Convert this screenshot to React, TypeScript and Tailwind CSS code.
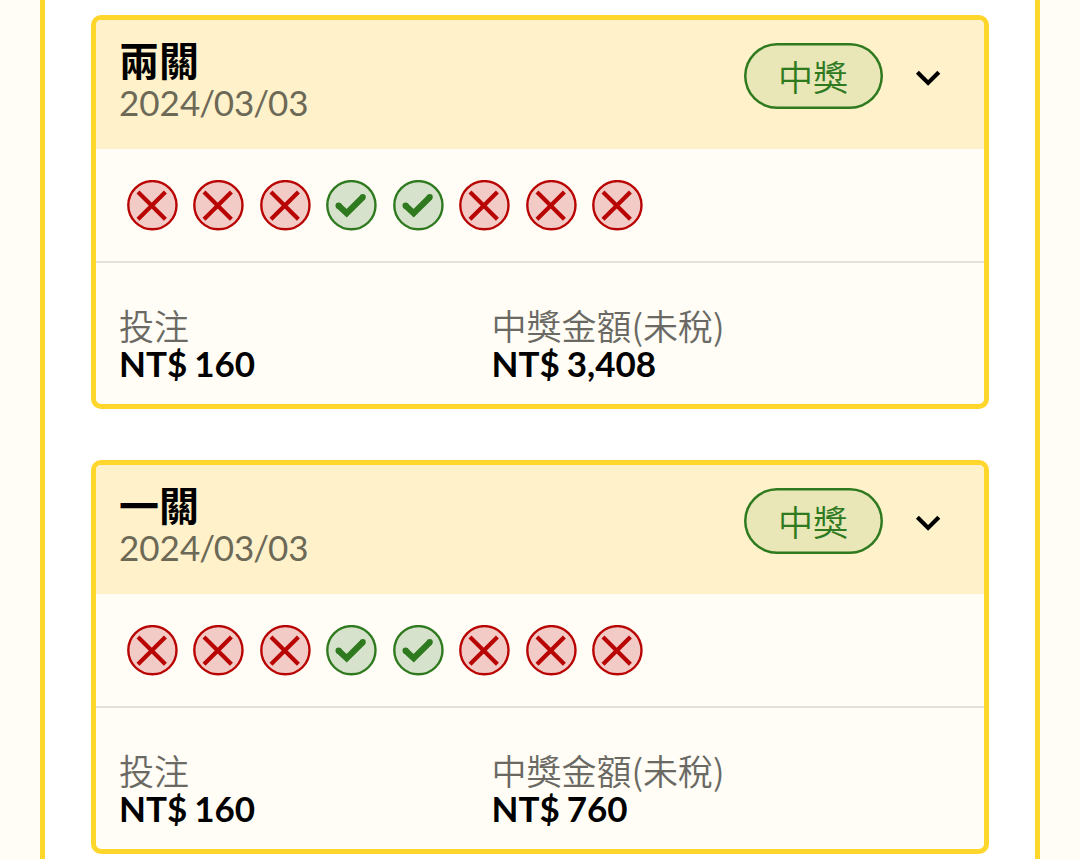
import { Fragment } from 'react';

type Ticket = { title: string; date: string; stake: string; prize: string; results: boolean[] };

const results = [false, false, false, true, true, false, false, false];

const tickets: Ticket[] = [
  { title: '兩關', date: '2024/03/03', stake: 'NT$ 160', prize: 'NT$ 3,408', results },
  { title: '一關', date: '2024/03/03', stake: 'NT$ 160', prize: 'NT$ 760', results },
];

function ResultIcon({ hit }: { hit: boolean }) {
  return hit ? (
    <svg viewBox="0 0 51 51" className="size-[51px] shrink-0" fill="none">
      <circle cx="25.4" cy="25.2" r="24.1" fill="#d6e2cc" stroke="#2f7a1f" strokeWidth="2.4" />
      <path d="M12.4 25.4 L20.7 33.2 L37 17" stroke="#2f7a1f" strokeWidth="6.2" />
      <circle cx="12.6" cy="25.7" r="3.1" fill="#2f7a1f" />
      <circle cx="36.8" cy="17" r="3" fill="#2f7a1f" />
    </svg>
  ) : (
    <svg viewBox="0 0 51 51" className="size-[51px] shrink-0" fill="none">
      <circle cx="25.4" cy="25.2" r="24.1" fill="#f2cac6" stroke="#b90404" strokeWidth="2.4" />
      <path d="M11 12 L38.4 39.2 M38.4 12 L11 39.2" stroke="#b90404" strokeWidth="4.2" />
    </svg>
  );
}

function DateText({ value }: { value: string }) {
  return (
    <p className="-mt-px text-[35px] leading-[42px] text-[#6d6957]">
      {value.split('/').map((part, i) => (
        <Fragment key={i}>
          {i > 0 && <span className="-mx-px tracking-[-0.3px]">/</span>}
          {part}
        </Fragment>
      ))}
    </p>
  );
}

function Amount({ label, value }: { label: string; value: string }) {
  return (
    <div className="w-[372.5px] whitespace-nowrap">
      <div className="font-['Noto_Sans_CJK_TC',sans-serif] text-[35px] leading-[39px] font-[350] text-[#6a6964]">{label}</div>
      <div className="text-[35px] leading-[38px] font-bold text-black [word-spacing:-1.5px]">{value}</div>
    </div>
  );
}

function TicketCard({ ticket }: { ticket: Ticket }) {
  return (
    <section className="h-[394px] overflow-hidden rounded-[10px] border-[5px] border-[#ffd62b] bg-[#fffdf5]">
      <header className="flex h-[129px] items-start bg-[#fff2cb] pl-[23px]">
        <div className="flex-1 pt-5">
          <h2 className="text-[40px] leading-[42px] font-bold text-black">{ticket.title}</h2>
          <DateText value={ticket.date} />
        </div>
        <span className="mt-[23px] flex h-[66px] w-[139px] items-center justify-center rounded-full bg-[#e9e7b8] pt-0.5 text-[35px] leading-[62px] font-[350] text-[#2f7a1f] shadow-[inset_0_0_0_2.5px_#2f7a1f]">
          中獎
        </span>
        <svg viewBox="0 0 26 18" className="mt-[49px] mr-[43px] ml-[32.5px] h-[18px] w-[26px]" fill="none">
          <path d="M2.4 3.2 L13.1 13.9 L23.8 3.2" stroke="#000" strokeWidth="4.2" />
        </svg>
      </header>
      <div className="flex h-[114px] gap-[15.5px] border-b-2 border-[#e4e0dc] pt-[31px] pl-[30.5px]">
        {ticket.results.map((hit, i) => (
          <ResultIcon key={i} hit={hit} />
        ))}
      </div>
      <div className="flex pt-[42px] pl-[23px]">
        <Amount label="投注" value={ticket.stake} />
        <Amount label="中獎金額(未稅)" value={ticket.prize} />
      </div>
    </section>
  );
}

export default function App() {
  return (
    <main className="h-[859px] overflow-hidden bg-[#fffdf5] px-10 font-['Lato','Noto_Sans_CJK_TC',sans-serif]">
      <div className="flex h-full flex-col gap-[51px] border-x-[5px] border-[#ffd62b] bg-white px-[46px] pt-[15px]">
        {tickets.map((ticket) => (
          <TicketCard key={ticket.title} ticket={ticket} />
        ))}
      </div>
    </main>
  );
}
